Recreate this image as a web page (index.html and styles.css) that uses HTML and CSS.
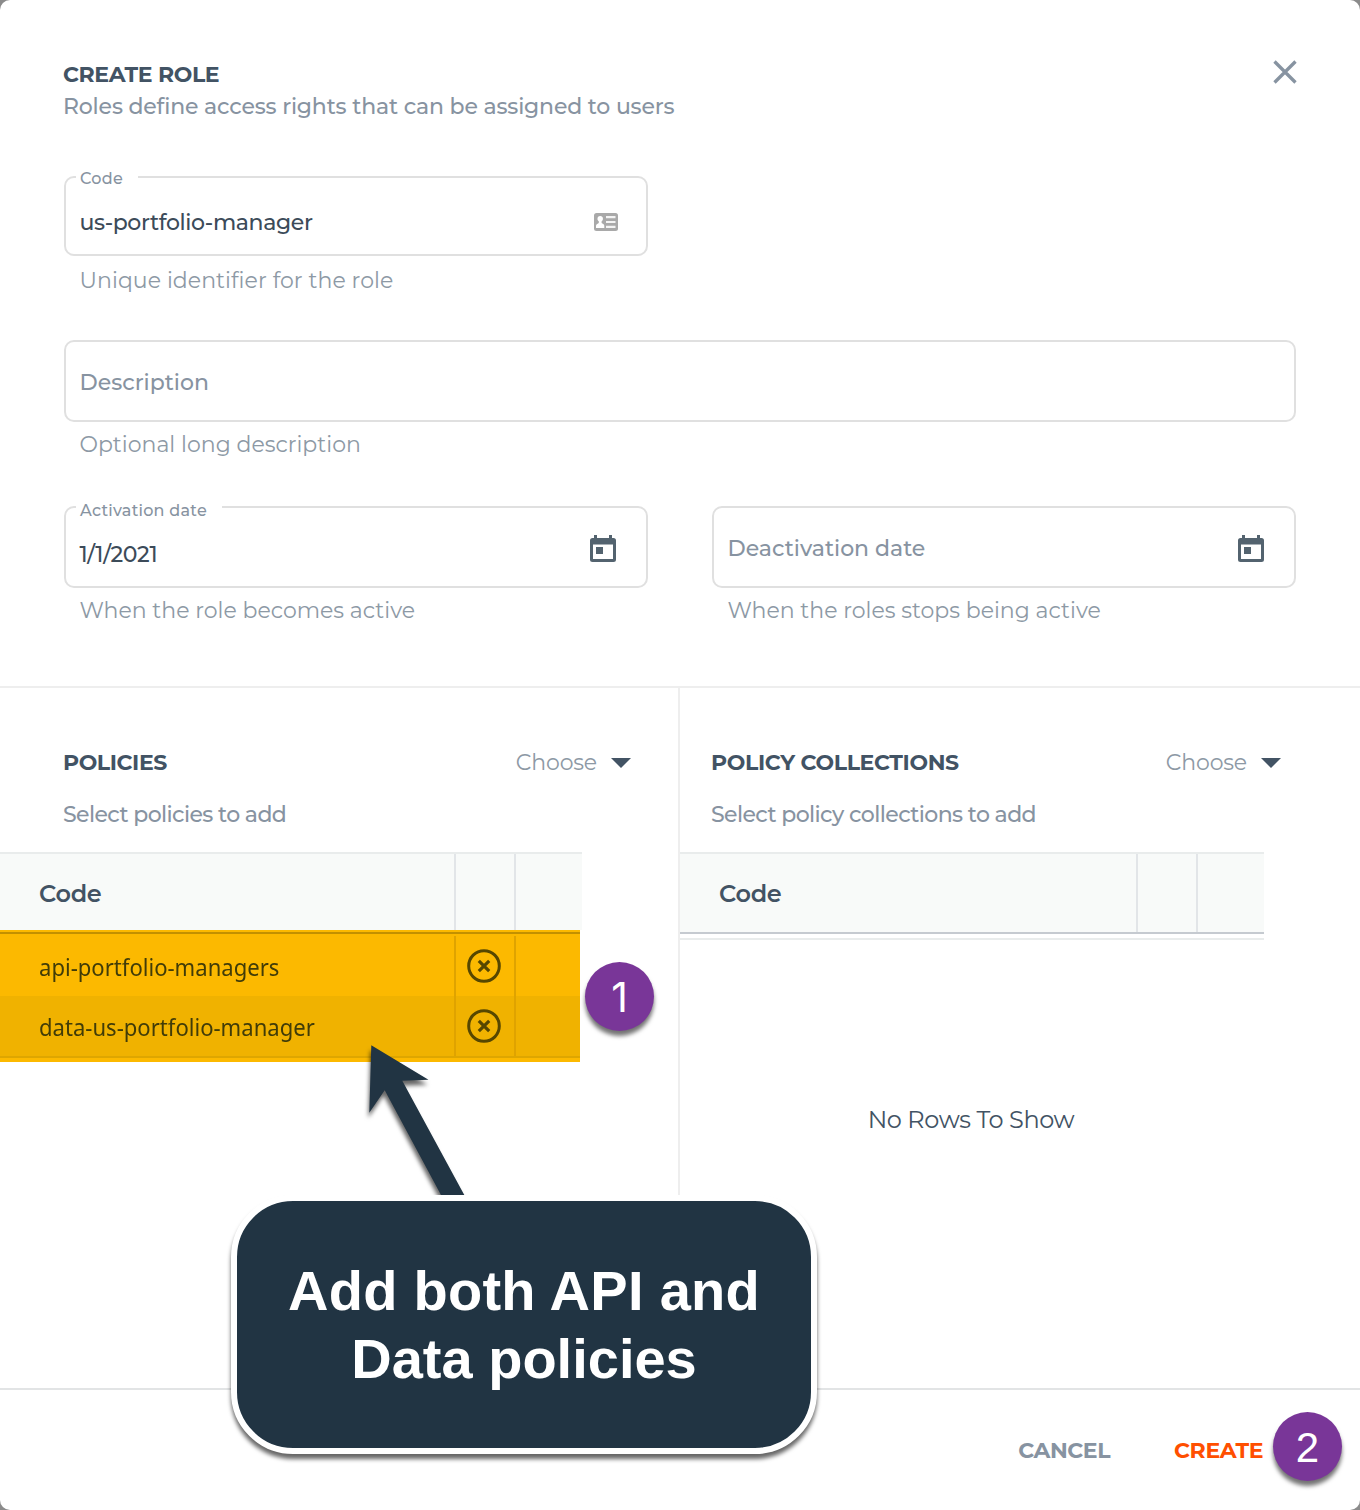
FILE: index.html
```html
<!DOCTYPE html>
<html lang="en">
<head>
<meta charset="utf-8">
<title>Create role</title>
<link rel="stylesheet" href="styles.css">
</head>
<body>
<main class="dialog">
  <section class="role-form">
    <header class="dialog-header">
      <div>
        <h1 class="title"><span class="t t-title">CREATE ROLE</span></h1>
        <p class="subtitle"><span class="t t-subtitle">Roles define access rights that can be assigned to users</span></p>
      </div>
      <button class="close" aria-label="Close"><svg width="24" height="24" viewBox="0 0 24 24"><path d="M1.500 1.500 22.500 22.500M22.500 1.500 1.500 22.500" stroke="#8793a1" stroke-width="3.300" fill="none"/></svg></button>
    </header>

    <div class="field code-field">
      <div class="box half">
        <span class="label label-code"><span class="t t-label-code">Code</span></span>
        <span class="value"><span class="t t-code">us-portfolio-manager</span></span>
        <svg class="id-icon" width="24" height="18" viewBox="0 0 24 18"><rect width="24" height="18" rx="2.500" fill="#a9a9a9"/><circle cx="6.200" cy="5.700" r="2.700" fill="#fff"/><path d="M4.800 7h2.800v3l2 1.200c.5.4.7.9.7 1.800v2H2v-2c0-.9.3-1.400.8-1.800l2-1.200z" fill="#fff"/><path d="M12 4.200h9.500M12 9h9.500M12 13.800h9.500" stroke="#f4f4f4" stroke-width="2.200"/></svg>
      </div>
      <p class="helper"><span class="t t-unique">Unique identifier for the role</span></p>
    </div>

    <div class="field desc-field">
      <div class="box tall"><span class="placeholder"><span class="t">Description</span></span></div>
      <p class="helper"><span class="t">Optional long description</span></p>
    </div>

    <div class="date-row">
      <div class="field">
        <div class="box tall">
          <span class="label label-act"><span class="t t-label-act">Activation date</span></span>
          <span class="value"><span class="t t-date">1/1/2021</span></span>
          <svg class="cal" width="26" height="28" viewBox="0 0 26 28"><path d="M4 0h3v3h12V0h3v3h1.500a2.500 2.500 0 0 1 2.500 2.500v19a2.500 2.500 0 0 1-2.500 2.500h-21A2.500 2.500 0 0 1 0 24.500v-19A2.500 2.500 0 0 1 2.500 3H4zM3 9.500V24h20V9.500zM6 12h7v7H6z" fill="#53636f" fill-rule="evenodd"/></svg>
        </div>
        <p class="helper"><span class="t">When the role becomes active</span></p>
      </div>
      <div class="field">
        <div class="box tall">
          <span class="placeholder"><span class="t">Deactivation date</span></span>
          <svg class="cal" width="26" height="28" viewBox="0 0 26 28"><path d="M4 0h3v3h12V0h3v3h1.500a2.500 2.500 0 0 1 2.500 2.500v19a2.500 2.500 0 0 1-2.500 2.500h-21A2.500 2.500 0 0 1 0 24.500v-19A2.500 2.500 0 0 1 2.500 3H4zM3 9.500V24h20V9.500zM6 12h7v7H6z" fill="#53636f" fill-rule="evenodd"/></svg>
        </div>
        <p class="helper"><span class="t">When the roles stops being active</span></p>
      </div>
    </div>
  </section>

  <section class="panels">
    <div class="panel policies">
      <div class="panel-head">
        <h2 class="title"><span class="t t-pol">POLICIES</span></h2>
        <span class="choose"><span class="t t-choose">Choose</span><i class="caret"></i></span>
      </div>
      <p class="subtitle panel-sub"><span class="t t-sub">Select policies to add</span></p>
      <div class="grid">
        <div class="grid-row grid-header"><span class="cell"><span class="t t-th">Code</span></span><span class="cell"></span><span class="cell"></span></div>
        <div class="grid-body">
          <div class="grid-row"><span class="cell"><span class="t t-row">api-portfolio-managers</span></span><span class="cell icon"><svg width="34" height="34" viewBox="0 0 34 34"><circle cx="17" cy="17" r="15.300" stroke="#564700" stroke-width="3" fill="none"/><path d="m11.800 11.800 10.400 10.400m0-10.400L11.800 22.200" stroke="#564700" stroke-width="3.200"/></svg></span><span class="cell"></span></div>
          <div class="grid-row alt"><span class="cell"><span class="t t-row">data-us-portfolio-manager</span></span><span class="cell icon"><svg width="34" height="34" viewBox="0 0 34 34"><circle cx="17" cy="17" r="15.300" stroke="#564700" stroke-width="3" fill="none"/><path d="m11.800 11.800 10.400 10.400m0-10.400L11.800 22.200" stroke="#564700" stroke-width="3.200"/></svg></span><span class="cell"></span></div>
        </div>
      </div>
    </div>
    <div class="panel collections">
      <div class="panel-head">
        <h2 class="title"><span class="t t-col">POLICY COLLECTIONS</span></h2>
        <span class="choose"><span class="t t-choose">Choose</span><i class="caret"></i></span>
      </div>
      <p class="subtitle panel-sub"><span class="t t-sub">Select policy collections to add</span></p>
      <div class="grid">
        <div class="grid-row grid-header"><span class="cell"><span class="t t-th">Code</span></span><span class="cell"></span><span class="cell"></span></div>
        <div class="empty"><span class="t t-empty">No Rows To Show</span></div>
      </div>
    </div>
  </section>

  <footer class="actions">
    <button class="btn"><span class="t t-btn">CANCEL</span></button>
    <button class="btn primary"><span class="t t-btn">CREATE</span></button>
  </footer>

  <span class="badge badge-one">1</span>
  <span class="badge badge-two">2</span>
  <svg class="arrow" width="110" height="154" viewBox="0 0 110 154"><path d="M11.300 4.300 68.500 38.800 42.300 39.800 104.300 154H81L24.700 49.200 9.300 71.700z" fill="#213443"/></svg>
  <div class="callout"><span class="t t-callout">Add both API and</span><span class="t">Data policies</span></div>
</main>
</body>
</html>
```
FILE: styles.css
```css
* { box-sizing: border-box; }
html { background: #8b8b8b; }
body { margin: 0; font-family: Montserrat, Inter, "Open Sans", sans-serif; font-size: 22px; color: #425364; }
h1, h2, p { margin: 0; }
button { border: 0; padding: 0; background: none; font: inherit; }

/* Text tracking */
.t { display: inline-block; white-space: nowrap; }
.t-title { letter-spacing: -0.37px; }
.t-subtitle { letter-spacing: -0.17px; }
.t-label-code { letter-spacing: 0.25px; }
.t-label-act { letter-spacing: 0.25px; }
.t-code { letter-spacing: -0.37px; }
.t-date { letter-spacing: -0.35px; }
.t-unique { letter-spacing: 0.06px; }
.t-pol { letter-spacing: -0.4px; }
.t-col { letter-spacing: -0.35px; }
.t-choose { letter-spacing: -0.15px; }
.t-sub { letter-spacing: -0.6px; }
.t-th { letter-spacing: -0.3px; }
.t-empty { letter-spacing: -0.38px; }
.t-btn { letter-spacing: -0.4px; }
.t-row { transform: scaleX(.92); transform-origin: left; }
.t-callout { letter-spacing: 0.28px; }

.dialog { position: relative; width: 1360px; height: 1510px; background: #fff; border-radius: 10px; overflow: hidden; display: flex; flex-direction: column; }
.role-form { height: 688px; padding: 58px 64px 0; border-bottom: 2px solid #eee; }
.dialog-header { display: flex; justify-content: space-between; height: 118px; line-height: 32px; padding-top: 1px; margin-left: -1px; }
.close { width: 24px; height: 24px; margin: 1px -1px 0 0; }
.close svg { display: block; }
.title { font-size: 22px; line-height: 32px; font-weight: 700; color: #425364; }
.subtitle { font-weight: 500; color: #8793a1; line-height: 32px; }

/* Outlined form fields */
.box { position: relative; height: 80px; border: 2px solid #e0e0e0; border-radius: 10px; display: flex; align-items: center; justify-content: space-between; padding: 0 30px 0 14px; }
.half { width: 584px; }
.tall { height: 82px; }
.helper { padding-left: 15.5px; line-height: 28px; color: #8d99a5; font-weight: 400; }
.code-field { height: 164px; }
.code-field .helper { padding-top: 11px; }
.desc-field { height: 166px; }
.desc-field .helper, .date-row .helper { padding-top: 9px; }
.date-row { display: grid; grid-template-columns: 584px 584px; gap: 64px; }
.label { position: absolute; left: 10px; top: -12px; height: 24px; padding-left: 4px; background: #fff; font-size: 16px; font-weight: 500; line-height: 26px; color: #8793a1; }
.label-code { width: 62px; }
.label-act { width: 146px; line-height: 30px; }
.value { margin-left: -0.5px; padding-top: 12px; color: #3c4b59; font-weight: 500; }
.tall .value { padding-top: 14px; }
.placeholder { margin-left: -0.5px; padding-top: 2px; color: #8793a1; font-weight: 500; }
.id-icon { margin-top: 12px; margin-right: -2px; }
.cal { margin-top: 4px; }

/* Policy panels */
.panels { display: grid; grid-template-columns: 680px 680px; height: 700px; }
.policies { border-right: 2px solid #eee; }
.panel-head { display: flex; justify-content: space-between; align-items: center; padding: 58px 47px 0 63px; height: 91px; }
.collections .panel-head { padding: 58px 79px 0 31px; }
.panel-sub { height: 73px; padding: 20px 0 0 63px; }
.collections .panel-sub { padding-left: 31px; }
.choose { display: flex; align-items: center; gap: 14px; color: #8d99a5; }
.caret { border: 10px solid transparent; border-top-color: #425364; border-bottom: 0; }
.grid { width: 582px; }
.collections .grid { width: 584px; }
.grid-row { display: grid; grid-template-columns: 456px 60px 1fr; height: 60px; }
.collections .grid-row { grid-template-columns: 458px 60px 1fr; }
.cell { display: flex; align-items: center; padding-left: 39px; border-right: 2px solid #e2e5e8; }
.cell:last-child { border-right: 0; }
.grid-header { height: 82px; border-top: 2px solid #e9ecec; border-bottom: 2px solid #c5cad0; background: #f8faf9; font-size: 24px; font-weight: 600; }
.policies .grid-header { height: 78px; border-bottom: 0; }
.policies .grid-header .cell { padding-top: 2px; }
.grid-body { position: relative; width: 580px; height: 132px; padding-top: 6px; background: #fcb900; font-family: "Noto Sans", sans-serif; font-size: 24px; color: #413c08; }
.grid-body::before { content: ""; position: absolute; left: 0; right: 0; top: 2px; height: 2px; background: #c29000; }
.grid-body .cell { border-color: #dfa300; }
.grid-body .icon { padding: 0 0 0 11px; }
.grid-body .alt { height: 62px; background: #f0b200; border-bottom: 2px solid #dea600; }
.empty { margin-top: 4px; border-top: 2px solid #e9ecec; padding: 164px 2px 0 0; text-align: center; line-height: 32px; font-size: 24px; }

.actions { height: 122px; border-top: 2px solid #e2e4e5; display: flex; justify-content: flex-end; align-items: center; padding: 2px 97px 0 0; gap: 64px; }
.btn { font-weight: 700; color: #8793a1; line-height: 32px; }
.primary { color: #ff4f00; }

/* Walkthrough annotations */
.badge { position: absolute; width: 69px; height: 69px; border-radius: 50%; background: #793698; color: #fff; font: 42px/72px "Liberation Sans", sans-serif; text-align: center; box-shadow: 0 5px 4px rgba(0,0,0,.55); }
.badge-one { left: 585px; top: 962px; font-family: Inter, sans-serif; font-size: 41px; line-height: 71px; }
.badge-two { left: 1273px; top: 1412px; }
.arrow { position: absolute; left: 360px; top: 1041px; filter: drop-shadow(-1px 5px 2px rgba(0,0,0,.6)); }
.callout { position: absolute; left: 231px; top: 1195px; width: 586px; height: 259px; padding-top: 1px; border: 6px solid #fff; border-radius: 62px; background: #213443; color: #fff; font: bold 56px/68px "Liberation Sans", sans-serif; display: flex; flex-direction: column; align-items: center; justify-content: center; box-shadow: 0 5px 4px rgba(0,0,0,.6); }
```
